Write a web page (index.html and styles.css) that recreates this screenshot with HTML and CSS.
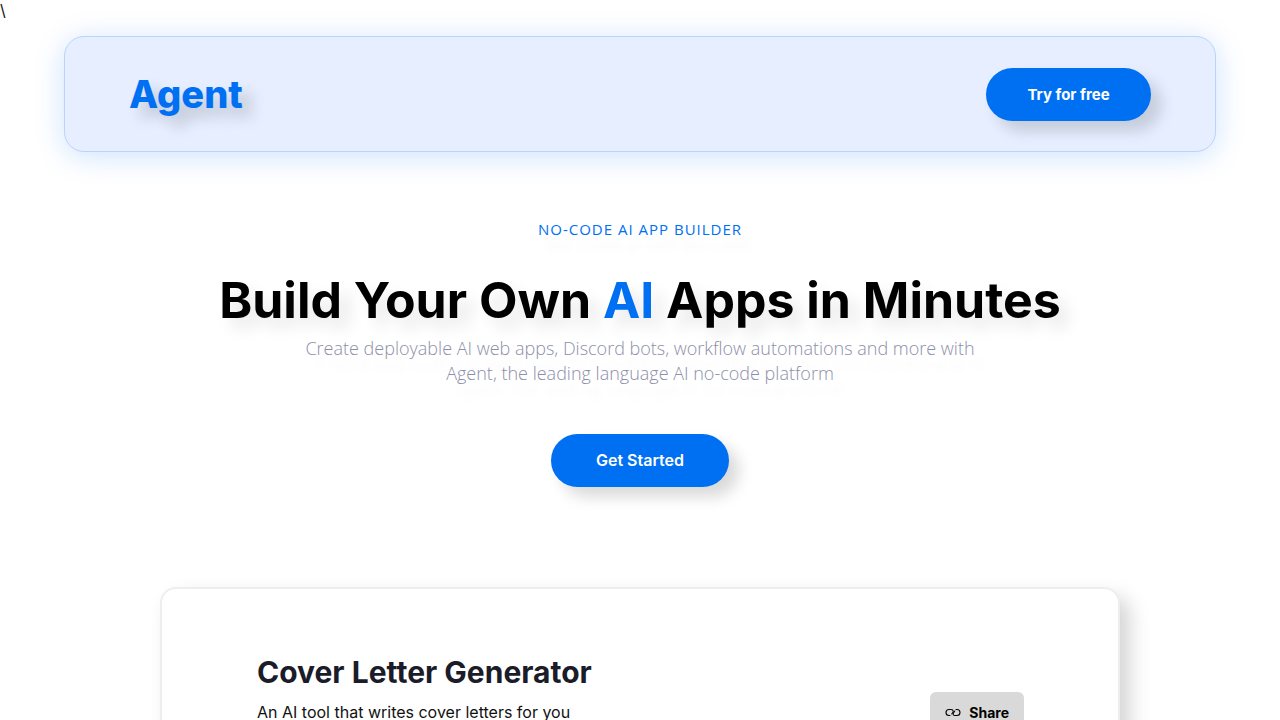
FILE: index.html
```html
<!DOCTYPE html>
<html lang="en">
<head>
    <meta charset="UTF-8">
    <meta name="viewport" content="width=device-width, initial-scale=1.0">
    <title>Agent - No-Code AI App Builder</title>
    <link rel="stylesheet" href="styles.css">
</head>
<body>
    \
    <header class="navbar">
        <a href="#" class="logo">Agent</a>
        <button class="btn nav-btn">Try for free</button>
    </header>

    <main>
        <section class="hero">
            <p class="eyebrow">NO-CODE AI APP BUILDER</p>
            <h1>Build Your Own <span class="highlight">AI</span> Apps in Minutes</h1>
            <p class="hero-text">Create deployable AI web apps, Discord bots, workflow automations and more with Agent, the leading language AI no-code platform</p>
            <button class="btn hero-btn">Get Started</button>
        </section>

        <section class="card">
            <div class="card-info">
                <h2>Cover Letter Generator</h2>
                <p>An AI tool that writes cover letters for you</p>
            </div>
            <button class="share-btn">
                <svg class="share-icon" viewBox="0 0 16 16" fill="none" stroke="currentColor" stroke-width="1.1" stroke-linecap="round" aria-hidden="true">
                    <path d="M5 11.500H4a3 3 0 0 1 0-6H6C8 5.500 8.800 7 7.800 8.500L6.800 10"/>
                    <path d="M11 5.500H12a3 3 0 0 1 0 6H10C8 11.500 7.800 10 8.600 8.800L9.800 7"/>
                </svg>
                Share
            </button>
        </section>
    </main>
</body>
</html>
```
FILE: styles.css
```css
* {
    margin: 0;
    padding: 0;
    box-sizing: border-box;
}

:root {
    --primary-color: #0070f3;
}

body {
    font-family: Inter, sans-serif;
    font-size: 16px;
    line-height: 20px;
    color: #111;
    background: #fff;
    overflow-x: hidden;
}

.navbar {
    display: flex;
    justify-content: space-between;
    align-items: center;
    width: 90%;
    margin: 16px auto 0;
    padding: 31px 64px 30px;
    background: #e6eeff;
    border: 1px solid #b9d5fb;
    border-radius: 20px;
    box-shadow: 0 4px 30px rgba(0, 112, 243, 0.2);
}

.logo {
    padding-bottom: 2px;
    font-size: 38px;
    line-height: 48px;
    font-weight: 800;
    color: var(--primary-color);
    text-decoration: none;
    text-shadow: 10px 10px 15px rgba(0, 0, 0, 0.2);
}

.btn {
    height: 53px;
    padding-bottom: 1px;
    font-family: inherit;
    font-size: 16px;
    font-weight: 600;
    color: #fff;
    background: var(--primary-color);
    border: none;
    border-radius: 27px;
    box-shadow: 10px 10px 15px rgba(0, 0, 0, 0.15);
    cursor: pointer;
}

.nav-btn {
    width: 165px;
    font-size: 15px;
    font-weight: 700;
}

.hero-btn {
    width: 178px;
}

.hero {
    display: flex;
    flex-direction: column;
    align-items: center;
    padding: 67px 24px 100px;
    text-align: center;
}

.eyebrow {
    font-family: "Open Sans", sans-serif;
    font-size: 15px;
    letter-spacing: 1px;
    color: var(--primary-color);
    text-shadow: 10px 16px 10px rgba(0, 0, 0, 0.06);
}

h1 {
    margin-top: 31px;
    font-size: 50px;
    line-height: 60px;
    font-weight: 700;
    color: #000;
    text-shadow: 10px 10px 15px rgba(0, 0, 0, 0.1);
}

.highlight {
    color: var(--primary-color);
}

.hero-text {
    max-width: 700px;
    margin: 6px 0 48px;
    font-family: "Open Sans", sans-serif;
    font-size: 18px;
    line-height: 25px;
    font-weight: 300;
    color: #8d8fa9;
    text-shadow: 10px 16px 10px rgba(0, 0, 0, 0.06);
}

.card {
    display: flex;
    justify-content: space-between;
    align-items: flex-end;
    width: 75%;
    margin: 0 auto;
    padding: 63px 94px 64px 95px;
    background: #fff;
    border: 2px solid #eee;
    border-radius: 16px;
    box-shadow: 10px 10px 20px rgba(0, 0, 0, 0.17);
}

h2 {
    margin-bottom: 10px;
    font-size: 30px;
    line-height: 40px;
    font-weight: 700;
    color: #1a1c29;
}

.card-info {
    padding-bottom: 10px;
}

.share-btn {
    display: flex;
    align-items: center;
    gap: 8px;
    height: 40px;
    padding: 0 15px;
    font-family: inherit;
    font-size: 14px;
    font-weight: 700;
    color: #000;
    background: #d9d9d9;
    border: none;
    border-radius: 6px;
    cursor: pointer;
}

.share-icon {
    width: 16px;
    height: 16px;
}
```
